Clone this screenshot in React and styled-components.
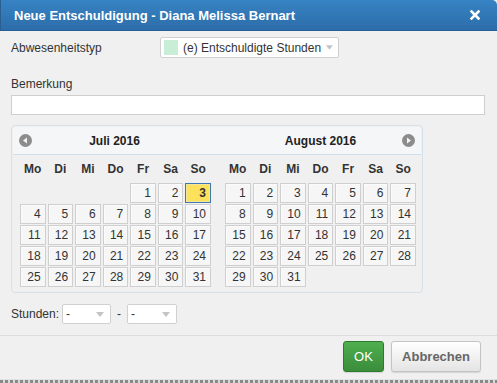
import React from "react";
import styled, { createGlobalStyle } from "styled-components";

const Global = createGlobalStyle`
  html, body { margin: 0; padding: 0; background: #f0f0f0; }
  body { font-family: "Liberation Sans", Arial, sans-serif; font-size: 12px; color: #333; }
  * { box-sizing: border-box; }
`;

const Dialog = styled.div`
  width: 497px;
  height: 380px;
  background: #f0f0f0;
  display: flex;
  flex-direction: column;
  border-bottom: 1px solid #e2e2e2;
`;

const PageEdge = styled.div`
  width: 497px;
  height: 3px;
  background: repeating-linear-gradient(90deg, #8a8a8a 0 3px, #d8d8d8 3px 5px);
`;

const TitleBar = styled.div`
  height: 31px;
  flex: none;
  padding: 0 17px 0 13px;
  display: flex;
  align-items: center;
  justify-content: space-between;
  background: linear-gradient(#3783c4, #2c6da9);
  border-bottom: 1px solid #255f95;
  border-left: 1px solid #2a5f8f;
  border-radius: 0 5px 0 0;
  color: #fff;
  font-weight: bold;
  font-size: 13px;
`;

const Body = styled.div`
  padding: 0 12px 0 11px;
  display: flex;
  flex-direction: column;
`;

const TypeRow = styled.div`
  margin-top: 6px;
  height: 21px;
  display: flex;
  align-items: center;
`;

const FieldLabel = styled.div`
  width: ${(p) => p.$w || "auto"};
  font-size: 12px;
  line-height: 14px;
  color: #333;
  margin-top: ${(p) => p.$mt || "0"};
`;

const SelectBox = styled.div`
  width: ${(p) => p.$w};
  height: ${(p) => p.$h};
  border: 1px solid #d0d0d0;
  border-radius: 2px;
  background: #fff;
  display: flex;
  align-items: center;
  padding: 0 ${(p) => p.$pr || "5px"} 0 ${(p) => p.$pl || "3px"};
  gap: 5px;
  font-size: 12px;
  color: #333;
`;

const Swatch = styled.span`
  width: 14px;
  height: 15px;
  background: #c8eed8;
  flex: none;
`;

const SelectText = styled.span`
  flex: 1;
  white-space: nowrap;
`;

const Arrow = () => (
  <svg width="8" height="5" viewBox="0 0 8 5">
    <path d="M0 0 L8 0 L4 5 Z" fill="#c4c4c4" />
  </svg>
);

const TextInput = styled.div`
  margin-top: 4px;
  height: 20px;
  width: 100%;
  border: 1px solid #cfcfcf;
  background: #fff;
`;

const Calendar = styled.div`
  margin-top: 10px;
  width: 412px;
  border: 1px solid #d6e0ea;
  border-radius: 4px;
  padding: 1px;
  background: #f0f0f0;
`;

const CalHeader = styled.div`
  height: 28px;
  background: #f5f6f7;
  border-bottom: 1px solid #d0dfee;
  border-radius: 3px 3px 0 0;
  display: flex;
  justify-content: space-between;
  padding: 0 5px 0 6px;
`;

const Months = styled.div`
  display: flex;
  justify-content: space-between;
  padding: 0 5px 4px 7px;
`;

const MonthHead = styled.div`
  width: 191px;
  display: grid;
  grid-template-columns: 14px 1fr 14px;
  align-items: center;
`;

const MonthTitle = styled.div`
  grid-column: 2;
  text-align: center;
  font-weight: bold;
  font-size: 12px;
  color: #222;
`;

const NavButton = styled.div`
  grid-column: ${(p) => (p.$next ? 3 : 1)};
  width: 13px;
  height: 13px;
  display: flex;
`;

const NavIcon = ({ next }) => (
  <NavButton $next={next}>
    <svg width="13" height="13" viewBox="0 0 13 13">
      <circle cx="6.5" cy="6.5" r="6.5" fill="#8c8c8c" />
      {next ? (
        <path d="M5 3.5 L9 6.5 L5 9.5 Z" fill="#f4f4f4" />
      ) : (
        <path d="M8 3.5 L4 6.5 L8 9.5 Z" fill="#f4f4f4" />
      )}
    </svg>
  </NavButton>
);

const Month = styled.div`
  width: 191px;
`;

const WeekDays = styled.div`
  display: grid;
  grid-template-columns: repeat(7, 1fr);
  column-gap: 2px;
  margin: 6px 0 6px;
  height: 16px;
  align-items: center;
`;

const WeekDay = styled.div`
  text-align: center;
  font-weight: bold;
  font-size: 12px;
  color: #333;
`;

const Days = styled.div`
  display: grid;
  grid-template-columns: repeat(7, 1fr);
  grid-auto-rows: 20px;
  column-gap: 2px;
  row-gap: 1px;
`;

const Day = styled.div`
  border: 1px solid ${(p) => (p.$active ? "#3f79b4" : "#cfcfcf")};
  background: ${(p) => (p.$active ? "#fbe15c" : "#f6f6f6")};
  box-shadow: ${(p) => (p.$active ? "inset 0 0 0 1px #f3e79a" : "inset 1px 1px 0 #fbfbfb")};
  text-align: right;
  padding-right: 4px;
  line-height: 18px;
  font-size: 12px;
  font-weight: ${(p) => (p.$active ? "bold" : "normal")};
  color: #333;
`;

const Blank = styled.div``;

const HoursRow = styled.div`
  margin-top: 11px;
  height: 20px;
  display: flex;
  align-items: center;
  gap: 3px;
`;

const Dash = styled.span`
  margin: 0 3px 0 3px;
  font-size: 12px;
`;

const Footer = styled.div`
  margin-top: 11px;
  border-top: 1px solid #dedede;
  padding: 5px 16px 0 0;
  display: flex;
  justify-content: flex-end;
  gap: 7px;
`;

const Button = styled.button`
  height: 31px;
  width: ${(p) => p.$w};
  border-radius: 3px;
  font-family: "Liberation Sans", Arial, sans-serif;
  font-size: 13px;
  padding: 0;
  border: 1px solid ${(p) => (p.$primary ? "#2c7a2c" : "#c4c4c4")};
  background: ${(p) =>
    p.$primary ? "linear-gradient(#4fae4f, #3b8d3b)" : "linear-gradient(#ffffff, #e4e4e4)"};
  color: ${(p) => (p.$primary ? "#fff" : "#666")};
  font-weight: ${(p) => (p.$primary ? "normal" : "bold")};
  box-shadow: 0 1px 1px rgba(0, 0, 0, 0.12);
`;

const CloseIcon = () => (
  <svg width="10" height="10" viewBox="0 0 10 10">
    <path d="M1.5 1.5 L8.5 8.5 M8.5 1.5 L1.5 8.5" stroke="#fff" strokeWidth="2.6" strokeLinecap="square" />
  </svg>
);

const weekDays = ["Mo", "Di", "Mi", "Do", "Fr", "Sa", "So"];

function MonthGrid({ offset, count, active }) {
  const cells = [];
  for (let i = 0; i < offset; i++) cells.push(<Blank key={"b" + i} />);
  for (let d = 1; d <= count; d++)
    cells.push(
      <Day key={d} $active={d === active}>
        {d}
      </Day>
    );
  return (
    <Month>
      <WeekDays>
        {weekDays.map((w) => (
          <WeekDay key={w}>{w}</WeekDay>
        ))}
      </WeekDays>
      <Days>{cells}</Days>
    </Month>
  );
}

export default function App() {
  return (
    <>
      <Global />
      <Dialog>
        <TitleBar>
          <span>Neue Entschuldigung - Diana Melissa Bernart</span>
          <CloseIcon />
        </TitleBar>
        <Body>
          <TypeRow>
            <FieldLabel $w="149px">Abwesenheitstyp</FieldLabel>
            <SelectBox $w="179px" $h="21px">
              <Swatch />
              <SelectText>(e) Entschuldigte Stunden</SelectText>
              <Arrow />
            </SelectBox>
          </TypeRow>
          <FieldLabel $mt="19px">Bemerkung</FieldLabel>
          <TextInput />
          <Calendar>
            <CalHeader>
              <MonthHead>
                <NavIcon />
                <MonthTitle>Juli 2016</MonthTitle>
              </MonthHead>
              <MonthHead>
                <MonthTitle>August 2016</MonthTitle>
                <NavIcon next />
              </MonthHead>
            </CalHeader>
            <Months>
              <MonthGrid offset={4} count={31} active={3} />
              <MonthGrid offset={0} count={31} />
            </Months>
          </Calendar>
          <HoursRow>
            <FieldLabel>Stunden:</FieldLabel>
            <SelectBox $w="49px" $h="20px" $pr="6px">
              <SelectText>-</SelectText>
              <Arrow />
            </SelectBox>
            <Dash>-</Dash>
            <SelectBox $w="50px" $h="20px" $pr="6px">
              <SelectText>-</SelectText>
              <Arrow />
            </SelectBox>
          </HoursRow>
        </Body>
        <Footer>
          <Button $primary $w="41px">OK</Button>
          <Button $w="90px">Abbrechen</Button>
        </Footer>
      </Dialog>
      <PageEdge />
    </>
  );
}
